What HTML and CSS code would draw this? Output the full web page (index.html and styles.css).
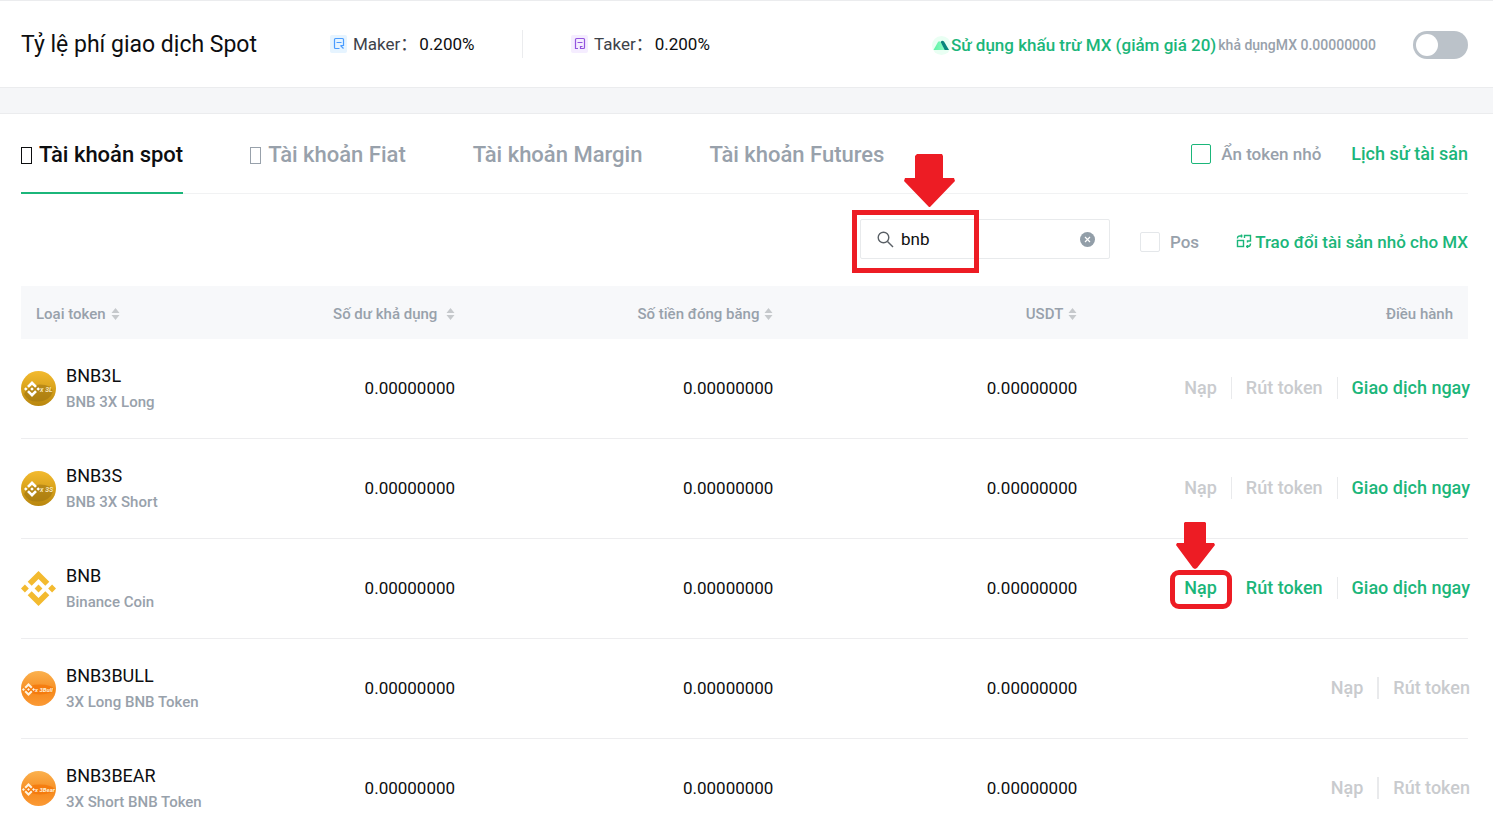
FILE: index.html
```html
<!DOCTYPE html>
<html lang="vi">
<head>
<meta charset="utf-8">
<title>Tài khoản spot</title>
<link rel="stylesheet" href="styles.css">
</head>
<body>
<svg class="defs" aria-hidden="true">
  <defs>
    <linearGradient id="gold" x1="0" y1="0" x2="0" y2="1"><stop offset="0" stop-color="#f3ba2f"/><stop offset=".5" stop-color="#d9a31c"/><stop offset="1" stop-color="#b8860f"/></linearGradient>
    <linearGradient id="orange" x1="0" y1="0" x2="0" y2="1"><stop offset="0" stop-color="#fbb24f"/><stop offset=".6" stop-color="#f68a1e"/><stop offset="1" stop-color="#fb9a35"/></linearGradient>
    <linearGradient id="mint" x1="0" y1="0" x2="1" y2="0"><stop offset="0" stop-color="#5df0a4"/><stop offset="1" stop-color="#8dffc4"/></linearGradient>
    <symbol id="bnb" viewBox="0 0 34 34">
      <path d="M17 0 27.500 10.500 23.600 14.400 17 7.800 10.400 14.400 6.500 10.500zM17 34 6.500 23.500 10.400 19.600 17 26.200 23.600 19.600 27.500 23.500zM17 13.200 20.800 17 17 20.800 13.200 17zM3.800 13.200 7.600 17 3.800 20.800 0 17zM30.200 13.200 34 17 30.200 20.800 26.400 17z"/>
    </symbol>
    <symbol id="sort" viewBox="0 0 8 12"><path d="M4 0 8 5H0zM4 12 0 7h8z"/></symbol>
  </defs>
</svg>

<header class="fees">
  <h1 class="fees-title">Tỷ lệ phí giao dịch Spot</h1>
  <div class="fee maker">
    <svg class="fee-icon" viewBox="0 0 17 18"><rect width="17" height="18" rx="2" fill="#e6f4ff"/><path d="M9.500 13.500H5.500a1 1 0 0 1-1-1V4.500a1 1 0 0 1 1-1h7a1 1 0 0 1 1 1V10.500h-3M6.500 7.500h5M10.500 10.500l3 3" fill="none" stroke="#4a9cff" stroke-width="1.200"/></svg>
    <span class="fee-label">Maker：</span><span class="fee-value">0.200%</span>
  </div>
  <div class="fee taker">
    <svg class="fee-icon" viewBox="0 0 17 18"><rect width="17" height="18" rx="2" fill="#f5edff"/><path d="M7 13.500H4.500V4.500a1 1 0 0 1 1-1h7a1 1 0 0 1 1 1v8a1 1 0 0 1-1 1H9.500v-2h2M6.500 7.500h5" fill="none" stroke="#9254de" stroke-width="1.200"/></svg>
    <span class="fee-label">Taker：</span><span class="fee-value">0.200%</span>
  </div>
  <div class="discount">
    <svg class="mx-icon" viewBox="0 0 19 19"><circle cx="9.500" cy="9.500" r="9.500" fill="#e9fff3"/><path d="M1.500 14 6 6q1.100-1.600 2.400 0l4.800 8z" fill="url(#mint)"/><path d="M8.600 6q1.500-2.200 3.400-.5l5 8.500h-4.300z" fill="#07867c"/></svg>
    <label for="mx-switch" class="discount-text">Sử dụng khấu trừ MX (giảm giá 20)</label>
    <span class="discount-balance">khả dụngMX 0.00000000</span>
    <input type="checkbox" id="mx-switch" class="switch" role="switch">
  </div>
</header>

<div class="divider"></div>

<main class="assets">
  <div class="tabs-bar">
    <nav class="tabs">
      <a class="tab active" href="#spot"><i class="tofu"></i>Tài khoản spot</a>
      <a class="tab" href="#fiat"><i class="tofu"></i>Tài khoản Fiat</a>
      <a class="tab" href="#margin">Tài khoản Margin</a>
      <a class="tab" href="#futures">Tài khoản Futures</a>
    </nav>
    <label class="check"><input type="checkbox" class="box green-box">Ẩn token nhỏ</label>
    <a class="link history" href="#history">Lịch sử tài sản</a>
  </div>

  <div class="toolbar">
    <div class="search">
      <svg class="search-icon" viewBox="0 0 17 17" fill="none" stroke="#5a6066" stroke-width="1.400"><circle cx="6.500" cy="6.500" r="5.300"/><path d="m10.500 10.500 5.500 5.500"/></svg>
      <input type="text" class="search-input" value="bnb" aria-label="bnb">
      <button class="clear" type="button"><svg viewBox="0 0 15 15"><circle cx="7.500" cy="7.500" r="7.500" fill="#929ea8"/><path d="m5 5 5 5M10 5l-5 5" stroke="#fff" stroke-width="1.200"/></svg></button>
      <span class="mark mark-search"></span>
      <svg class="arrow arrow-search" viewBox="0 0 51 53"><path d="M13 0h13q2 0 2 0h10l1 2v22h11l1 3-25 26h-1L0 27l1-3h10V2z"/></svg>
    </div>
    <label class="check pos"><input type="checkbox" class="box">Pos</label>
    <a class="link convert" href="#convert"><svg class="swap-icon" viewBox="0 0 16 15" fill="none" stroke="#1bb67a" stroke-width="1.400"><rect x="1.500" y="6.500" width="6" height="6"/><path d="M1.500 4.500q0-2.500 2.500-2.500h2.500M5.500.5v3M8.500 4V1.500h6v5.500h-3v1.500M14.500 9.500q0 3-2.500 3h-2M11.500 11v3"/></svg>Trao đổi tài sản nhỏ cho MX</a>
  </div>

  <table class="table">
    <colgroup><col class="c-token"><col class="c-free"><col class="c-frozen"><col class="c-usdt"><col class="c-ops"></colgroup>
    <thead>
      <tr>
        <th>Loại token<svg class="sort"><use href="#sort"/></svg></th>
        <th>Số dư khả dụng <svg class="sort"><use href="#sort"/></svg></th>
        <th>Số tiền đóng băng<svg class="sort"><use href="#sort"/></svg></th>
        <th>USDT<svg class="sort"><use href="#sort"/></svg></th>
        <th>Điều hành</th>
      </tr>
    </thead>
    <tbody>
      <tr>
        <td><div class="token"><svg class="coin" viewBox="0 0 35 35"><circle cx="17.500" cy="17.500" r="17.500" fill="url(#gold)"/><path d="M3 23q4-9 16-9.500 11 0 13 7-3 9-14 10T3 23" fill="#9c7210" opacity=".55"/><use href="#bnb" x="3" y="10" width="16" height="16" fill="#fff"/><text x="19" y="20.500" class="coin-text">x 3L</text></svg><div class="token-text"><div class="name">BNB3L</div><div class="desc">BNB 3X Long</div></div></div></td>
        <td>0.00000000</td><td>0.00000000</td><td>0.00000000</td>
        <td><div class="ops"><button disabled>Nạp</button><button disabled>Rút token</button><a href="#trade">Giao dịch ngay</a></div></td>
      </tr>
      <tr>
        <td><div class="token"><svg class="coin" viewBox="0 0 35 35"><circle cx="17.500" cy="17.500" r="17.500" fill="url(#gold)"/><path d="M3 23q4-9 16-9.500 11 0 13 7-3 9-14 10T3 23" fill="#9c7210" opacity=".55"/><use href="#bnb" x="3" y="10" width="16" height="16" fill="#fff"/><text x="19" y="20.500" class="coin-text">x 3S</text></svg><div class="token-text"><div class="name">BNB3S</div><div class="desc">BNB 3X Short</div></div></div></td>
        <td>0.00000000</td><td>0.00000000</td><td>0.00000000</td>
        <td><div class="ops"><button disabled>Nạp</button><button disabled>Rút token</button><a href="#trade">Giao dịch ngay</a></div></td>
      </tr>
      <tr>
        <td><div class="token"><svg class="coin" fill="#f3ba2f"><use href="#bnb"/></svg><div class="token-text"><div class="name">BNB</div><div class="desc">Binance Coin</div></div></div></td>
        <td>0.00000000</td><td>0.00000000</td><td>0.00000000</td>
        <td><div class="ops"><a class="marked" href="#deposit">Nạp<span class="mark mark-deposit"></span><svg class="arrow arrow-deposit" viewBox="0 0 39 47"><path d="M9 0h20l1 1v20h8l1 2-18 23-2 1-2-1L0 23l1-2h7V1z"/></svg></a><a href="#withdraw">Rút token</a><a href="#trade">Giao dịch ngay</a></div></td>
      </tr>
      <tr>
        <td><div class="token"><svg class="coin" viewBox="0 0 35 35"><circle cx="17.500" cy="17.500" r="17.500" fill="url(#orange)"/><ellipse cx="19" cy="18.500" rx="14" ry="5" fill="#f47508" opacity=".75"/><use href="#bnb" x="1" y="12" width="13" height="13" fill="#fff3df"/><text x="14" y="21" class="coin-text small">x 3Bull</text></svg><div class="token-text"><div class="name">BNB3BULL</div><div class="desc">3X Long BNB Token</div></div></div></td>
        <td>0.00000000</td><td>0.00000000</td><td>0.00000000</td>
        <td><div class="ops thick"><button disabled>Nạp</button><button disabled>Rút token</button></div></td>
      </tr>
      <tr>
        <td><div class="token"><svg class="coin" viewBox="0 0 35 35"><circle cx="17.500" cy="17.500" r="17.500" fill="url(#orange)"/><ellipse cx="19" cy="18.500" rx="14" ry="5" fill="#f47508" opacity=".75"/><use href="#bnb" x="1" y="12" width="13" height="13" fill="#fff3df"/><text x="14" y="21" class="coin-text small">x 3Bear</text></svg><div class="token-text"><div class="name">BNB3BEAR</div><div class="desc">3X Short BNB Token</div></div></div></td>
        <td>0.00000000</td><td>0.00000000</td><td>0.00000000</td>
        <td><div class="ops thick"><button disabled>Nạp</button><button disabled>Rút token</button></div></td>
      </tr>
    </tbody>
  </table>
</main>
</body>
</html>
```

FILE: styles.css
```css
* { box-sizing: border-box; }
body {
  margin: 0;
  background: #fff;
  color: #0d0e10;
  font: 400 17px/26px Roboto, "Noto Sans CJK SC", sans-serif;
}
a { color: inherit; text-decoration: none; }
button { font: inherit; border: 0; background: none; padding: 0; }
.defs { position: absolute; width: 0; height: 0; }

/* Fee header */
.fees {
  display: flex;
  align-items: center;
  height: 88px;
  padding: 0 25px 0 21px;
  border: solid #ebecee;
  border-width: 1px 0;
}
.fees-title { margin: 0; padding-top: 2px; width: 309px; font-size: 23px; font-weight: 400; }
.fee { display: flex; align-items: center; height: 28px; }
.fee-icon { width: 17px; height: 18px; margin-right: 6px; }
.fee-label { color: #3d4249; }
.fee-value { margin-left: 2px; }
.maker { width: 193px; border-right: 1px solid #ebecee; }
.taker { padding-left: 48px; }
.discount { display: flex; align-items: center; margin-left: auto; padding-top: 2px; color: #1bb67a; }
.mx-icon { width: 19px; height: 19px; }
.discount-text { padding-right: 2px; font-weight: 500; }
.discount-balance { margin-right: 37px; color: #98a1ab; font-size: 14px; font-weight: 500; }
.switch {
  appearance: none;
  display: flex;
  width: 55px;
  height: 28px;
  margin: 0;
  padding: 3px;
  border-radius: 14px;
  background: #bbc2c9;
}
.switch::before { content: ""; width: 22px; height: 22px; border-radius: 50%; background: #fff; }
.divider { height: 26px; background: #f5f6f8; border-bottom: 1px solid #ebecee; }

/* Account tabs */
.assets { padding: 0 25px 0 21px; }
.tabs-bar { display: flex; align-items: center; height: 80px; border-bottom: 1px solid #f1f2f3; }
.tabs { display: flex; gap: 67px; margin-right: auto; height: 80px; }
.tab {
  display: flex;
  align-items: center;
  padding-top: 5px;
  border-bottom: 2px solid transparent;
  color: #98a1ab;
  font-size: 22px;
  font-weight: 500;
}
.tab.active { color: #0d0e10; border-color: #1bb67a; }
.tofu { width: 11px; height: 17px; margin-right: 7px; border: 1px solid; }
.check { display: flex; align-items: center; gap: 10px; margin-right: 30px; color: #98a1ab; font-weight: 500; }
.box { appearance: none; width: 20px; height: 20px; margin: 0; border: 1px solid #e4e7ea; border-radius: 2px; }
.green-box { border-color: #1bb67a; }
.link { display: flex; align-items: center; color: #1bb67a; font-weight: 500; }
.history { font-size: 18px; }

/* Search row */
.toolbar { display: flex; justify-content: flex-end; align-items: center; padding: 25px 0 27px; }
.search {
  position: relative;
  display: flex;
  align-items: center;
  width: 250px;
  height: 40px;
  margin-right: 30px;
  padding: 0 14px 0 16px;
  border: 1px solid #e8eaec;
  border-radius: 2px;
}
.search-icon { width: 17px; height: 17px; margin-right: 7px; flex: none; }
.search-input { flex: 1; min-width: 0; padding: 0; border: 0; outline: 0; color: inherit; font: inherit; }
.clear { display: flex; width: 15px; height: 15px; }
.pos, .convert { padding-top: 5px; }
.pos { margin-right: 37px; }
.swap-icon { width: 16px; height: 15px; margin-right: 3px; }

/* Annotations */
.mark { position: absolute; border: 5px solid #ed1c24; }
.arrow { position: absolute; fill: #ed1c24; }
.mark-search { left: -9px; top: -10px; width: 127px; height: 63px; }
.arrow-search { left: 43px; top: -66px; width: 51px; height: 53px; }
.mark-deposit { left: -14px; top: -7px; width: 62px; height: 39px; border-radius: 9px; }
.arrow-deposit { left: -8px; top: -55px; width: 39px; height: 47px; }

/* Balances */
.table { width: 100%; table-layout: fixed; border-collapse: collapse; }
.c-token { width: 15%; }
.c-free { width: 15%; }
.c-frozen { width: 22%; }
.c-usdt { width: 21%; }
.c-ops { width: 27%; }
th, td { padding: 0; text-align: right; }
th { height: 53px; padding-top: 2px; background: #f7f8fa; color: #98a1ab; font-size: 15px; font-weight: 500; white-space: nowrap; }
th:first-child { padding-left: 15px; text-align: left; }
th:last-child { padding-right: 15px; }
.sort { width: 9px; height: 12px; margin-left: 5px; vertical-align: -1px; fill: #c6c9cc; }
td { padding: 22px 0 23px; border-bottom: 1px solid #ededef; }
tr:last-child td { padding-bottom: 14px; border: 0; }
.token { display: flex; align-items: center; gap: 10px; text-align: left; white-space: nowrap; }
.token-text { padding-top: 2px; }
.name { font-size: 18px; }
.coin { width: 35px; height: 35px; flex: none; }
.coin-text { fill: #f5e3b4; font: italic 700 7px Roboto, sans-serif; }
.coin-text.small { fill: #fff0d8; font-size: 6px; }
.desc { color: #98a1ab; font-size: 15px; font-weight: 500; }
.ops { display: flex; justify-content: flex-end; margin-right: -2px; font-size: 18px; line-height: 22px; font-weight: 500; color: #1bb67a; }
.ops > * + * { margin-left: 14px; padding-left: 14px; border-left: 1px solid #e9eaec; }
.ops.thick > * + * { border-left-width: 2px; }
.ops button { color: #c9cbce; }
.marked { position: relative; }
```
